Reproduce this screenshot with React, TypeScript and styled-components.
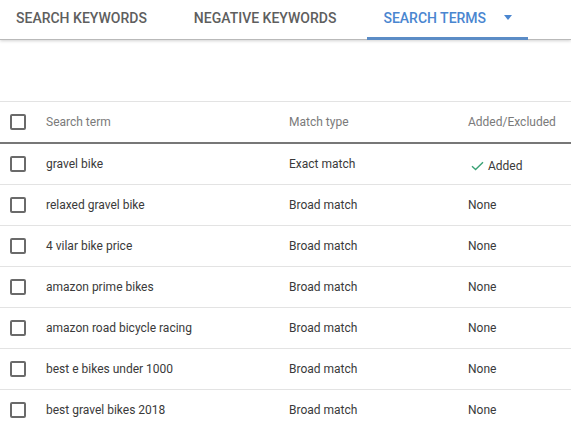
import styled, { createGlobalStyle } from "styled-components";

const GlobalStyle = createGlobalStyle`
  body {
    margin: 0;
    background: #fff;
    font-family: Roboto, "Liberation Sans", Arial, sans-serif;
  }
`;

const rows = [
  { term: "gravel bike", match: "Exact match", added: true },
  { term: "relaxed gravel bike", match: "Broad match", added: false },
  { term: "4 vilar bike price", match: "Broad match", added: false },
  { term: "amazon prime bikes", match: "Broad match", added: false },
  { term: "amazon road bicycle racing", match: "Broad match", added: false },
  { term: "best e bikes under 1000", match: "Broad match", added: false },
  { term: "best gravel bikes 2018", match: "Broad match", added: false },
];

export default function App() {
  return (
    <Page>
      <GlobalStyle />
      <TabBar>
        <Tab>Search keywords</Tab>
        <Tab>Negative keywords</Tab>
        <Tab $active>
          Search terms
          <Caret />
        </Tab>
      </TabBar>

      <Table>
        <HeaderRow>
          <Checkbox />
          <HeadCell>Search term</HeadCell>
          <HeadCell>Match type</HeadCell>
          <HeadCell>Added/Excluded</HeadCell>
        </HeaderRow>
        {rows.map((r) => (
          <Row key={r.term}>
            <Checkbox />
            <Cell>{r.term}</Cell>
            <Cell>{r.match}</Cell>
            {r.added ? (
              <Status>
                <svg width="13" height="10" viewBox="0 0 13 10">
                  <path d="M1 5.2 L4.6 8.6 L12 1.2" fill="none" stroke="#3aa276" strokeWidth="1.4" />
                </svg>
                Added
              </Status>
            ) : (
              <Cell>None</Cell>
            )}
          </Row>
        ))}
      </Table>
    </Page>
  );
}

const Page = styled.div`
  width: 571px;
  height: 430px;
  overflow: hidden;
  background: #fff;
`;

const TabBar = styled.div`
  display: flex;
  gap: 15px;
  height: 39px;
  border-bottom: 1px solid #b9b9b9;
  box-shadow: 0 1px 3px rgba(0, 0, 0, 0.18);
`;

const Tab = styled.div<{ $active?: boolean }>`
  display: flex;
  align-items: center;
  padding: 0 16px 2px;
  font-size: 14px;
  font-weight: 500;
  text-transform: uppercase;
  color: ${(p) => (p.$active ? "#4a86d0" : "#5e5e5e")};
  border-bottom: 3px solid ${(p) => (p.$active ? "#5b8cc6" : "transparent")};
  margin-bottom: -1px;
  box-sizing: border-box;
`;

const Caret = styled.span`
  width: 0;
  height: 0;
  margin-left: 18px;
  border-left: 4px solid transparent;
  border-right: 4px solid transparent;
  border-top: 5px solid #4a86d0;
`;

const Table = styled.div`
  margin-top: 61px;
  border-top: 1px solid #e3e3e3;
`;

const gridCols = `
  display: grid;
  grid-template-columns: 36px 243px 179px 1fr;
  align-items: center;
  padding-left: 10px;
`;

const HeaderRow = styled.div`
  ${gridCols}
  height: 40px;
  border-bottom: 2px solid #777;
`;

const Row = styled.div`
  ${gridCols}
  height: 40px;
  border-bottom: 1px solid #e3e3e3;
`;

const Checkbox = styled.span`
  width: 16px;
  height: 16px;
  box-sizing: border-box;
  border: 2px solid #6a6a6a;
  border-radius: 2px;
`;

const HeadCell = styled.div`
  font-size: 12px;
  color: #7a7a7a;
`;

const Cell = styled.div`
  font-size: 12px;
  color: #3a3a3a;
`;

const Status = styled.div`
  display: flex;
  align-items: center;
  gap: 4px;
  margin-left: 3px;
  margin-top: 3px;
  font-size: 12px;
  color: #3a3a3a;
`;
